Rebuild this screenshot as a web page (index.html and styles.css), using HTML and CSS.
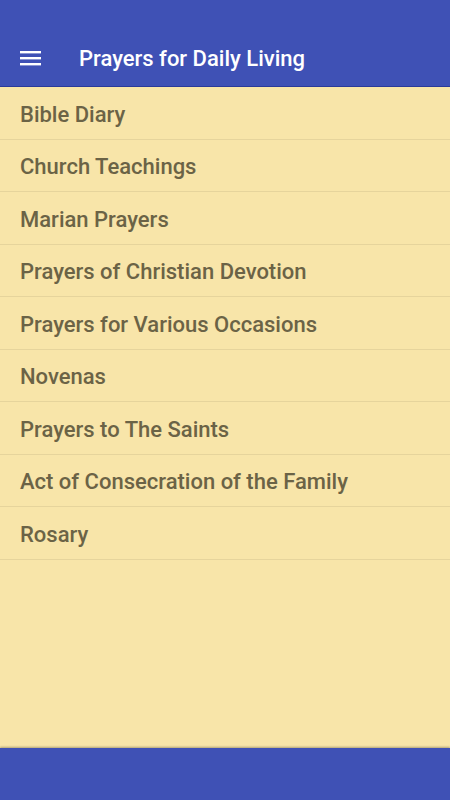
FILE: index.html
```html
<html>
  <head>
    <title>Prayers for Daily Living</title>
    <link rel="stylesheet" href="styles.css">
  </head>
  <body>
    <div id="app">
      <div id="bar">
        <svg class="menu" width="22" height="16" viewBox="0 0 22 16">
          <rect x="0" y="1" width="21" height="2.4" fill="#fff"/>
          <rect x="0" y="7" width="21" height="2.4" fill="#fff"/>
          <rect x="0" y="13" width="21" height="2.4" fill="#fff"/>
        </svg>
        <span class="title">Prayers for Daily Living</span>
      </div>
      <ul id="list">
        <li>Bible Diary</li>
        <li>Church Teachings</li>
        <li>Marian Prayers</li>
        <li>Prayers of Christian Devotion</li>
        <li>Prayers for Various Occasions</li>
        <li>Novenas</li>
        <li>Prayers to The Saints</li>
        <li>Act of Consecration of the Family</li>
        <li>Rosary</li>
      </ul>
      <div id="foot"></div>
    </div>
  </body>
</html>
```
FILE: styles.css
```css
body {
  margin: 0;
  font-family: Roboto, "Noto Sans", sans-serif;
  background: #f8e5a9;
}
#app {
  display: flex;
  flex-direction: column;
  height: 800px;
}
#bar {
  height: 87px;
  box-sizing: border-box;
  padding: 30px 0 0 20px;
  display: flex;
  align-items: center;
  background: #3f51b5;
  border-bottom: 1px solid #2a3a9a;
}
.menu {
  margin-top: -1px;
}
.title {
  margin-left: 37px;
  color: #fff;
  font-size: 22px;
  font-weight: 500;
}
#list {
  flex: 1;
  margin: 0;
  padding: 0;
  list-style: none;
}
#list li {
  height: 52.5px;
  box-sizing: border-box;
  padding: 3px 0 0 20px;
  display: flex;
  align-items: center;
  border-bottom: 1px solid #e6d49c;
  color: #6b6346;
  font-size: 22px;
  font-weight: 500;
}
#foot {
  height: 52px;
  background: #3f51b5;
  box-shadow: 0 -1px 2px rgba(0, 0, 0, 0.3);
}
```
